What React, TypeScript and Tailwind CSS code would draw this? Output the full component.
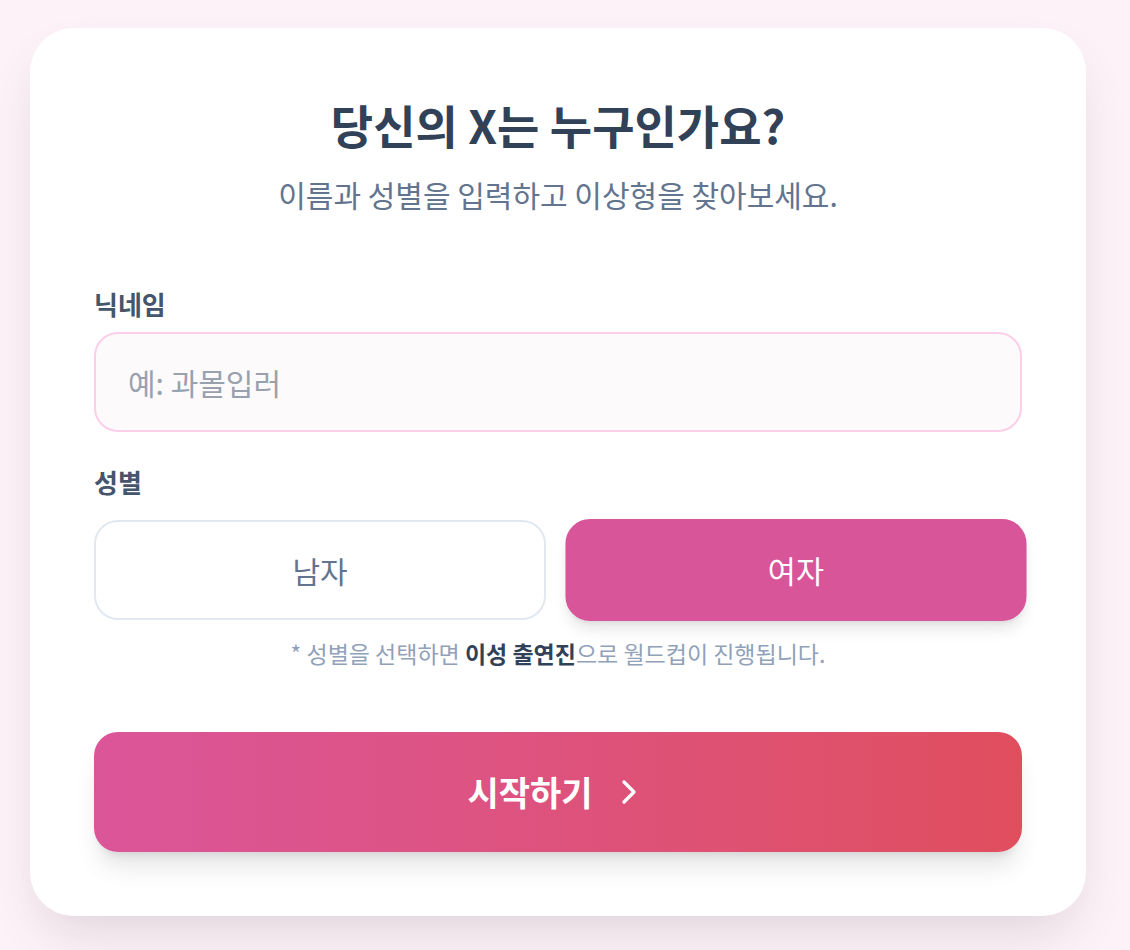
import React, { useState } from "react";
import { ChevronRight } from "lucide-react";

const font = { fontFamily: '"Noto Sans CJK KR", "Noto Sans", sans-serif' };

export default function App() {
  const [gender, setGender] = useState<"male" | "female">("female");
  const [name, setName] = useState("");

  const active =
    "scale-[1.02] rounded-3xl border-2 border-[#d9559a] bg-[#d9559a] py-8 text-[30px] leading-8 text-white shadow-lg";
  const idle =
    "rounded-3xl border-2 border-slate-200 bg-white py-8 text-[30px] leading-8 text-slate-500";

  return (
    <div className="min-h-[950px] bg-[#fdf2f8] pl-[30px] pt-[28px] pb-[35px]" style={font}>
      <div className="w-[1056px] rounded-[44px] bg-white px-16 pt-[68px] pb-16 shadow-2xl shadow-[#6b5a66]/20">
        <div className="text-center">
          <h1 className="text-[46px] font-bold leading-[56px] text-slate-700">당신의 X는 누구인가요?</h1>
          <p className="mt-6 text-[30px] leading-9 text-slate-500">이름과 성별을 입력하고 이상형을 찾아보세요.</p>
        </div>

        <label className="mt-[76px] mb-3 block text-[26px] font-semibold leading-8 text-slate-600">닉네임</label>
        <input
          value={name}
          onChange={(e) => setName(e.target.value)}
          placeholder="예: 과몰입러"
          className="block w-full rounded-3xl border-2 border-pink-200 bg-[#fdfafc] px-8 py-8 text-[30px] leading-8 text-slate-700 outline-none placeholder:text-gray-400"
        />

        <label className="mt-[34px] mb-[22px] block text-[26px] font-semibold leading-8 text-slate-600">성별</label>
        <div className="grid grid-cols-2 gap-6">
          <button onClick={() => setGender("male")} className={gender === "male" ? active : idle}>
            남자
          </button>
          <button onClick={() => setGender("female")} className={gender === "female" ? active : idle}>
            여자
          </button>
        </div>
        <p className="mt-4 text-center text-[23px] leading-[34px] text-slate-400">
          * 성별을 선택하면 <b className="font-bold text-slate-700">이성 출연진</b>으로 월드컵이 진행됩니다.
        </p>

        <button className="mt-[62px] flex w-full items-center justify-center gap-4 rounded-3xl bg-gradient-to-r from-[#db5599] to-[#e04e5e] py-10 text-[34px] font-bold leading-10 text-white shadow-xl">
          시작하기
          <ChevronRight size={40} strokeWidth={2} />
        </button>
      </div>
    </div>
  );
}
